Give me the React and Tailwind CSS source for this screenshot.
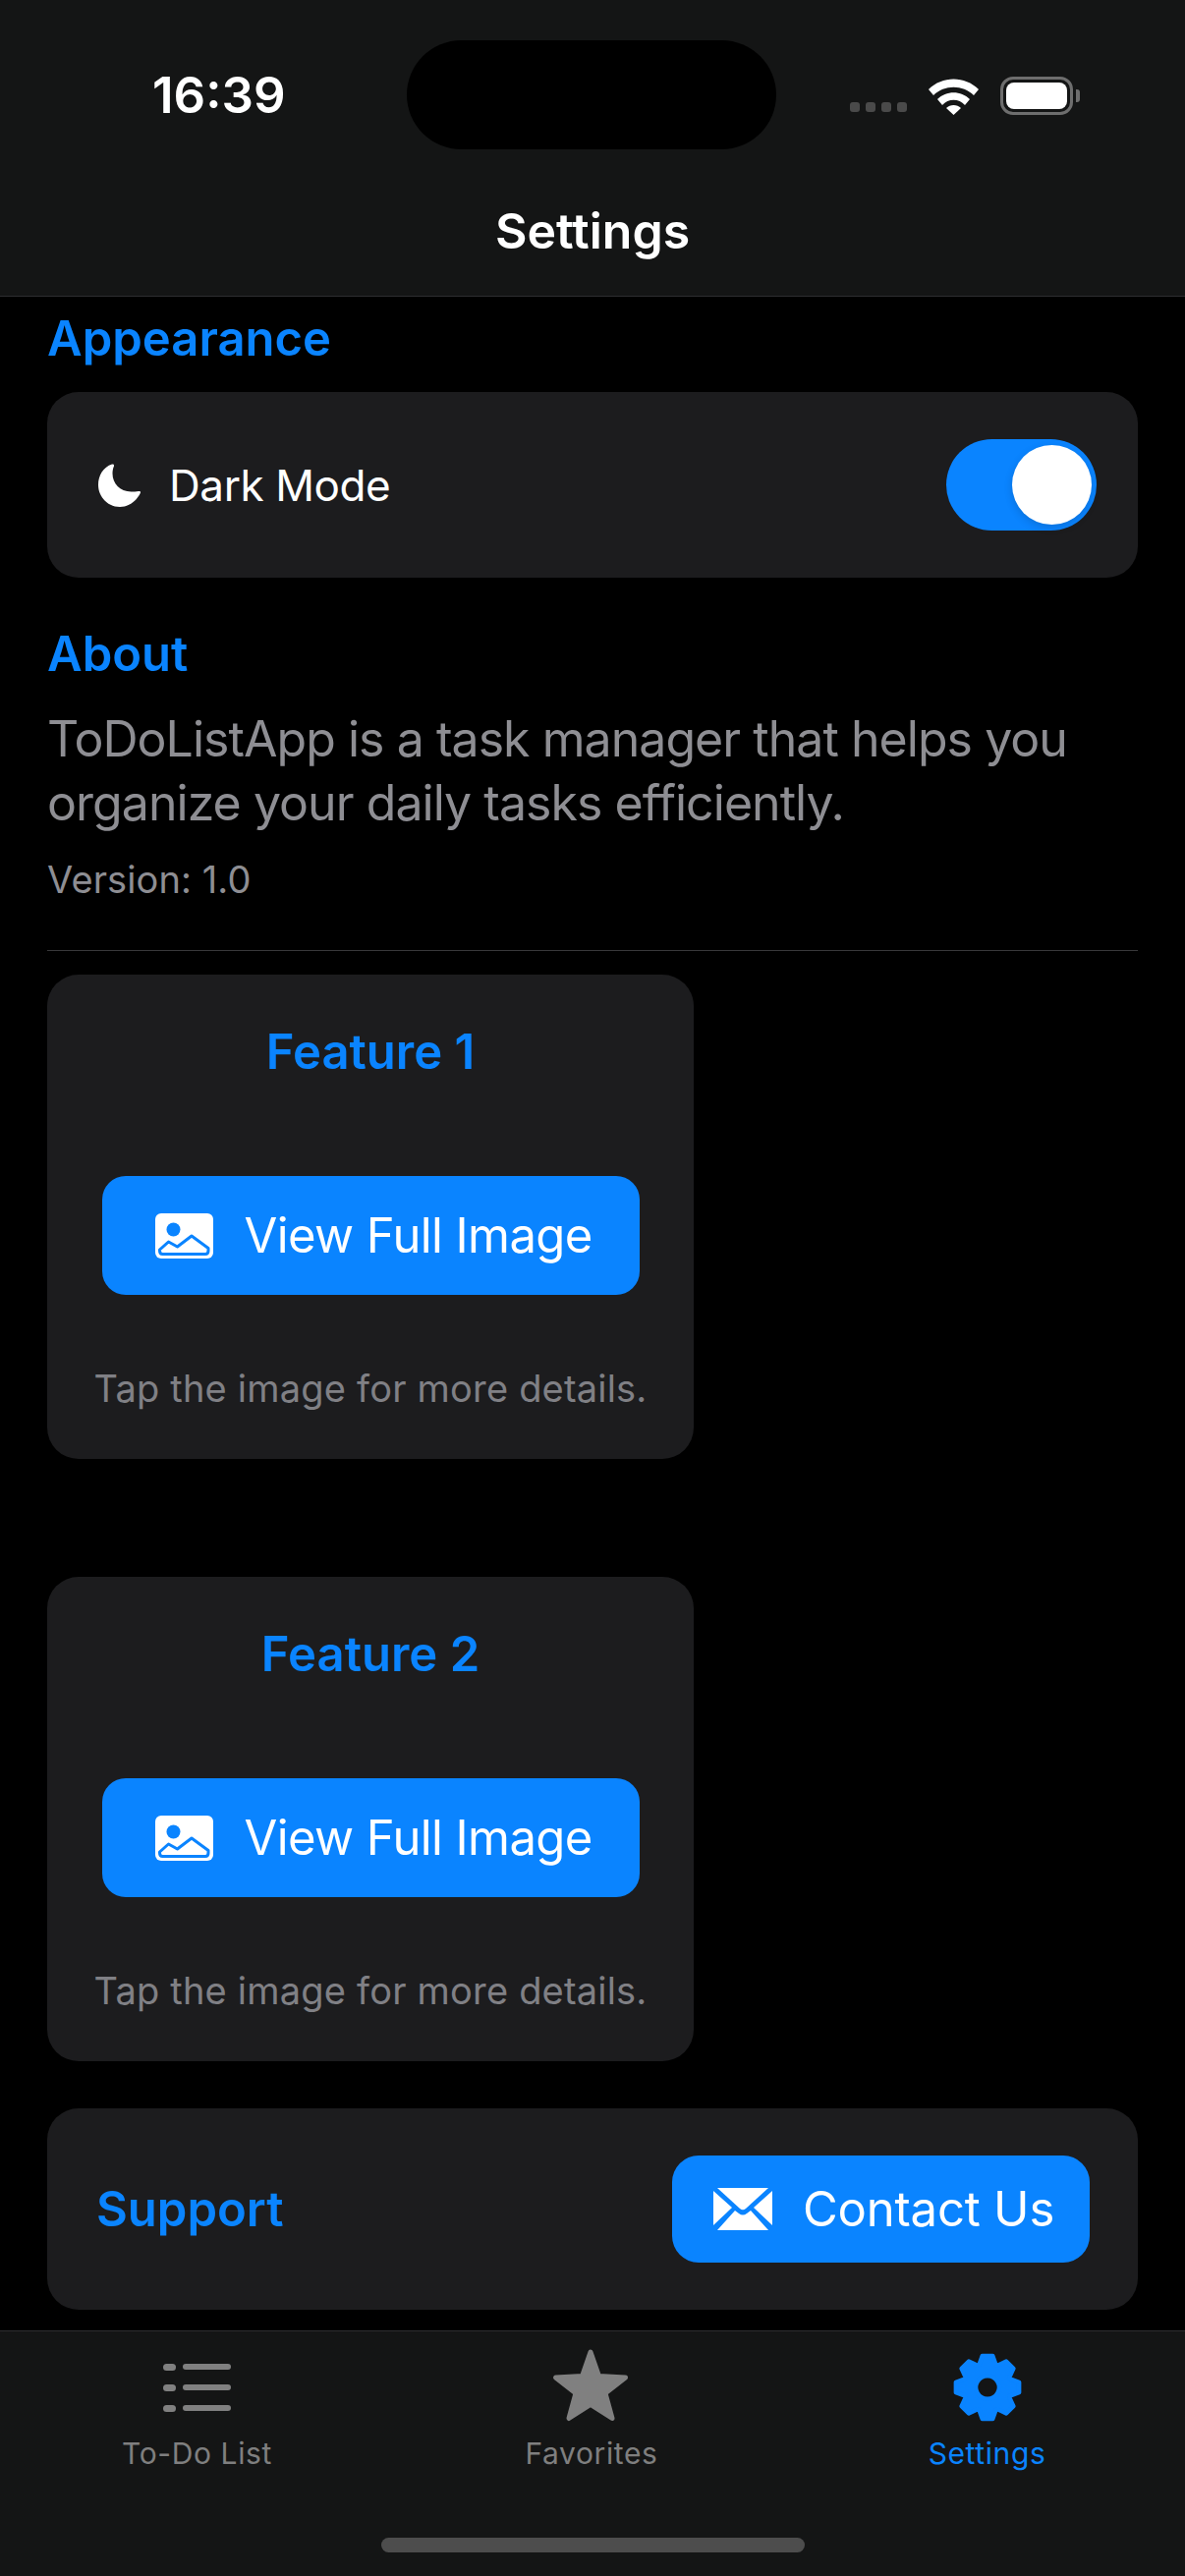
import React from "react";

const FONT = { fontFamily: "Inter, sans-serif" };

const gearPath = () => {
  const cx = 50, cy = 50;
  const pts = [];
  for (let i = 0; i < 8; i++) {
    const a = (i * Math.PI) / 4 - Math.PI / 2;
    const at = (r, d) => [cx + r * Math.cos(a + d), cy + r * Math.sin(a + d)];
    pts.push(at(33, -0.36), at(44, -0.16), at(44, 0.16), at(33, 0.36));
  }
  const outer = "M" + pts.map((p) => p.map((n) => n.toFixed(2)).join(" ")).join("L") + "Z";
  return outer + " M50 34a16 16 0 1 0 0.01 0Z";
};

const PhotoIcon = () => (
  <svg width="59" height="46" viewBox="0 0 59 46" className="shrink-0">
    <rect width="59" height="46" rx="6" fill="#fff" />
    <circle cx="18.500" cy="16.500" r="7" fill="#0a84ff" />
    <path
      d="M4.500 37 L13.500 29 L22.500 34 L37 23 L54 35.500 V38 Q54 41.500 51 41.500 H7.500 Q4.500 41.500 4.500 38 Z"
      fill="#fff"
      stroke="#0a84ff"
      strokeWidth="3"
      strokeLinejoin="round"
    />
  </svg>
);

const MailIcon = () => (
  <svg width="60" height="43" viewBox="0 0 60 43" className="shrink-0">
    <path d="M4 0H56L33 21Q30 23.5 27 21Z" fill="#fff" />
    <path d="M0 3L19 20L0 38Z" fill="#fff" />
    <path d="M60 3L41 20L60 38Z" fill="#fff" />
    <path d="M4 43L22 23L26 26Q30 29 34 26L38 23L56 43Z" fill="#fff" />
  </svg>
);

const FeatureCard = ({ title }) => (
  <div className="w-[658px] h-[493px] rounded-[32px] bg-[#1c1c1e] flex flex-col items-center">
    <div className="mt-[50px] h-[58px] leading-[58px] text-[49px] font-semibold text-[#0a84ff]">{title}</div>
    <button className="mt-[97px] w-[547px] h-[121px] rounded-[24px] bg-[#0a84ff] flex items-center pl-[54px] gap-[32px] text-white text-[49px] tracking-[-0.6px]">
      <PhotoIcon />
      <span>View Full Image</span>
    </button>
    <div className="mt-[71px] text-[38px] leading-[48px] tracking-[0.2px] text-[#808085]">Tap the image for more details.</div>
  </div>
);

const TabItem = ({ icon, label, active }) => (
  <div className="flex flex-col items-center">
    <div className="h-[80px] flex items-center justify-center">{icon}</div>
    <div className={`mt-[9px] text-[30px] leading-[36px] tracking-[0.6px] ${active ? "text-[#0a84ff]" : "text-[#7f7f7f]"}`}>{label}</div>
  </div>
);

const ListIcon = () => (
  <div className="w-[69px] flex flex-col gap-[14px]">
    {[0, 1, 2].map((i) => (
      <div key={i} className="flex items-center gap-[7px]">
        <div className="w-[13px] h-[7px] rounded-full bg-[#808080]" />
        <div className="w-[49px] h-[6px] rounded-full bg-[#808080]" />
      </div>
    ))}
  </div>
);

export default function App() {
  return (
    <div className="w-[1206px] h-[2622px] bg-black flex flex-col overflow-hidden text-white" style={FONT}>
      <header className="h-[302px] shrink-0 bg-[#141515] border-b border-[#2e2e30] flex flex-col">
        <div className="flex items-center pt-[41px] pl-[155px]">
          <div className="w-[259px] text-[51px] leading-[111px] font-semibold">16:39</div>
          <div className="w-[376px] h-[111px] rounded-[56px] bg-black" />
          <div className="ml-[75px] flex items-end gap-[22px] h-[40px]">
            <div className="flex gap-[6px] pb-[3px]">
              {[0, 1, 2, 3].map((i) => (
                <div key={i} className="w-[10px] h-[10px] rounded-[3px] bg-[#4a4a4a]" />
              ))}
            </div>
            <svg width="51" height="37" viewBox="0 0 51 37" className="shrink-0">
              <path d="M0 11C14 -3 37 -3 51 11L46 17C35 6 16 6 5 17Z" fill="#fff" />
              <path d="M9 21C18 12 33 12 42 21L37 27C31 20 20 20 14 27Z" fill="#fff" />
              <path d="M18 30C22 26 29 26 33 30L25.500 37Z" fill="#fff" />
            </svg>
            <div className="flex items-center gap-[3px]">
              <div className="w-[74px] h-[39px] rounded-[13px] border-[3px] border-[#6e6e6e] p-[3px]">
                <div className="w-full h-full rounded-[8px] bg-white" />
              </div>
              <div className="w-[4px] h-[13px] rounded-r-[3px] bg-[#6e6e6e]" />
            </div>
          </div>
        </div>
        <div className="mt-[54px] text-center text-[50px] leading-[58px] font-semibold">Settings</div>
      </header>

      <main className="flex-1 min-h-0 overflow-hidden px-[48px] flex flex-col">
        <div className="mt-[14px] text-[49px] leading-[58px] font-semibold text-[#0a84ff]">Appearance</div>
        <div className="mt-[25px] h-[189px] rounded-[32px] bg-[#1c1c1e] flex items-center pl-[52px] pr-[42px]">
          <svg width="44" height="44" viewBox="0 0 44 44" className="shrink-0">
            <path d="M14 0.5C5 3.500 0 12 0 21.500C0 33.500 9.500 44 22 44C31 44 39 38 43 29.500Q43.500 27.500 41 28C38.500 28.500 36 28.500 33.500 28.500C22 28.500 14.500 20 14.500 10C14.500 7 15 4.500 16 2.500Q16.500 0 14 0.5Z" fill="#fff" />
          </svg>
          <div className="ml-[28px] text-[44px] leading-[56px] tracking-[-0.4px]">Dark Mode</div>
          <div className="ml-auto w-[153px] h-[93px] rounded-full bg-[#0a84ff] flex items-center justify-end pr-[5px]">
            <div className="w-[81px] h-[81px] rounded-full bg-white shadow-[0_3px_8px_rgba(0,0,0,0.15)]" />
          </div>
        </div>

        <div className="mt-[49px] text-[49px] leading-[58px] font-semibold text-[#0a84ff]">About</div>
        <div className="mt-[25px] text-[50px] leading-[65px] tracking-[-0.95px] text-[#8e8e93]">
          ToDoListApp is a task manager that helps you
          <br />
          organize your daily tasks efficiently.
        </div>
        <div className="mt-[22px] text-[38px] leading-[46px] tracking-[0.1px] text-[#8e8e93]">Version: 1.0</div>
        <div className="mt-[49px] h-px bg-[#38383a] shrink-0" />

        <div className="mt-[24px] flex flex-col gap-[120px]">
          <FeatureCard title="Feature 1" />
          <FeatureCard title="Feature 2" />
        </div>

        <div className="mt-[48px] h-[205px] shrink-0 rounded-[32px] bg-[#1c1c1e] flex items-center justify-between pl-[50px] pr-[49px]">
          <div className="text-[49px] leading-[58px] font-semibold text-[#0a84ff]">Support</div>
          <button className="w-[425px] h-[109px] rounded-[27px] bg-[#0a84ff] flex items-center pl-[42px] gap-[31px] text-white text-[49px] tracking-[-0.2px]">
            <MailIcon />
            <span>Contact Us</span>
          </button>
        </div>
      </main>

      <nav className="h-[250px] shrink-0 bg-[#141515] border-t border-[#2e2e30] flex flex-col">
        <div className="grid grid-cols-[401px_402px_403px] pt-[17px]">
          <TabItem icon={<ListIcon />} label="To-Do List" />
          <TabItem
            icon={
              <svg width="78" height="75" viewBox="1 2.500 78 75" className="overflow-visible">
                <path d="M39 3.500L47.500 28L74.500 29.500L54 45.500L61 71L39 57L17 71L24 45.500L3.500 29.500L30.500 28Z" fill="#808080" stroke="#808080" strokeWidth="5" strokeLinejoin="round" />
              </svg>
            }
            label="Favorites"
          />
          <TabItem
            icon={
              <svg width="74" height="74" viewBox="0 0 100 100">
                <path d={gearPath()} fill="#0a84ff" fillRule="evenodd" stroke="#0a84ff" strokeWidth="6" strokeLinejoin="round" />
              </svg>
            }
            label="Settings"
            active
          />
        </div>
        <div className="mt-auto mb-[24px] mx-auto w-[431px] h-[15px] rounded-full bg-[#4d4d4d]" />
      </nav>
    </div>
  );
}
